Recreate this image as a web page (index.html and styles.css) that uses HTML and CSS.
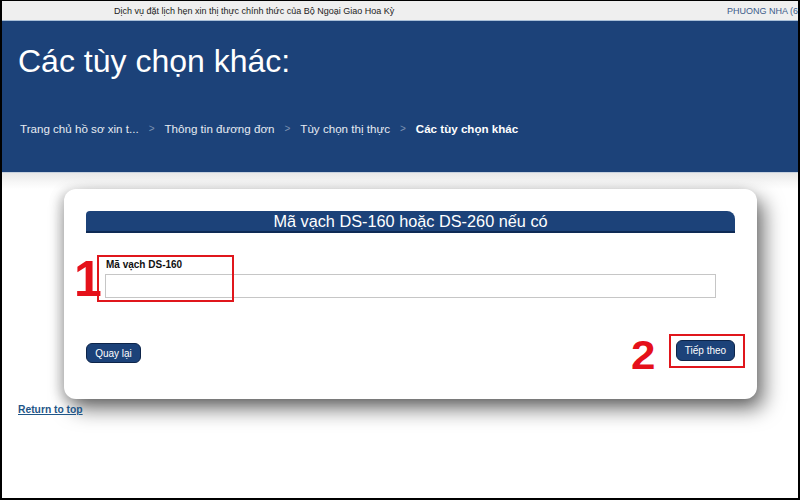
FILE: index.html
```html
<!DOCTYPE html>
<html lang="vi">
<head>
    <meta charset="UTF-8">
    <meta name="viewport" content="width=device-width, initial-scale=1.0">
    <title>Các tùy chọn khác</title>
    <link rel="stylesheet" href="styles.css">
</head>
<body>
    <div class="frame">
        <!-- Top strip -->
        <div class="topbar">
            <span class="site-name">Dịch vụ đặt lịch hẹn xin thị thực chính thức của Bộ Ngoại Giao Hoa Kỳ</span>
            <span class="user-name">PHUONG NHA (6</span>
        </div>

        <!-- Page header -->
        <div class="header">
            <h1>Các tùy chọn khác:</h1>
            <div class="crumbs">
                <span>Trang chủ hồ sơ xin t...</span>
                <span class="sep">&gt;</span>
                <span>Thông tin đương đơn</span>
                <span class="sep">&gt;</span>
                <span>Tùy chọn thị thực</span>
                <span class="sep">&gt;</span>
                <span class="current">Các tùy chọn khác</span>
            </div>
        </div>

        <div class="main">
            <div class="card">
                <div class="section-title">Mã vạch DS-160 hoặc DS-260 nếu có</div>

                <div class="field">
                    <label for="barcode">Mã vạch DS-160</label>
                    <input type="text" id="barcode">
                    <!-- annotation -->
                    <span class="mark-box mark-box-1"></span>
                    <span class="mark-num mark-num-1">1</span>
                </div>

                <div class="actions">
                    <button class="btn btn-back">Quay lại</button>
                    <div class="next-wrap">
                        <span class="mark-num mark-num-2">2</span>
                        <span class="mark-box mark-box-2"></span>
                        <button class="btn btn-next">Tiếp theo</button>
                    </div>
                </div>
            </div>

            <a href="#" class="return-top">Return to top</a>
        </div>
    </div>
</body>
</html>
```

FILE: styles.css
```css
* {
    box-sizing: border-box;
}

body, html {
    margin: 0;
    padding: 0;
    background-color: #ffffff;
    font-family: "Liberation Sans", Arial, sans-serif;
}

.frame {
    width: 800px;
    height: 500px;
    border-top: 1px solid #000;
    border-left: 2px solid #000;
    border-right: 2px solid #000;
    border-bottom: 2px solid #000;
    overflow: hidden;
    background: #fff;
}

.topbar {
    height: 20px;
    background-color: #efefef;
    border-bottom: 1px solid #a9bfd8;
    display: flex;
    justify-content: space-between;
    align-items: center;
    padding-left: 112px;
    font-size: 9px;
    white-space: nowrap;
}

.site-name {
    color: #222;
}

.user-name {
    color: #3b5b8a;
}

.header {
    height: 152px;
    background-color: #1c4279;
    padding: 20px 0 0 16px;
    border-bottom: 1px solid #c7d1de;
}

.header h1 {
    margin: 0;
    color: #fff;
    font-weight: normal;
    font-size: 32px;
    line-height: 40px;
}

.crumbs {
    margin: 41px 0 0 2px;
    font-size: 11.6px;
    color: #e6ebf2;
    display: flex;
    gap: 10px;
}

.crumbs .sep {
    color: #7d93b3;
    font-size: 10px;
    line-height: 14px;
}

.crumbs .current {
    font-weight: bold;
    color: #fff;
}

.main {
    padding: 16px 0 0 62px;
    background: linear-gradient(to bottom, #e8e8e8 0, #f8f8f8 10px, #fff 16px);
}

.card {
    width: 693px;
    height: 210px;
    background: #fff;
    border-radius: 12px;
    padding: 22px 22px 0 22px;
    box-shadow: 7px 10px 20px rgba(0, 0, 0, 0.55), -4px 2px 12px rgba(0, 0, 0, 0.2);
}

.section-title {
    height: 22px;
    background-color: #1c4279;
    border-bottom: 2px solid #0e2a55;
    border-radius: 4px 8px 0 0;
    color: #fff;
    text-align: center;
    font-size: 16.3px;
    line-height: 20px;
}

.field {
    position: relative;
    margin-top: 22px;
    padding: 4px 19px 0 19px;
}

.field label {
    display: block;
    font-weight: bold;
    font-size: 10px;
    line-height: 12px;
    color: #111;
    margin-left: 1px;
    margin-bottom: 3px;
}

.field input {
    width: 100%;
    height: 24px;
    border: 1px solid #c6c6c6;
    background: #fff;
    padding: 2px 4px;
}

.mark-box {
    position: absolute;
    border: 2px solid #e0161c;
}

.mark-box-1 {
    left: 11px;
    top: 0;
    width: 137px;
    height: 47px;
}

.mark-num {
    position: absolute;
    color: #e5111a;
    font-weight: bold;
    font-family: "Liberation Sans", Arial, sans-serif;
}

.mark-num-1 {
    left: -12px;
    top: -1px;
    font-size: 50px;
    line-height: 50px;
}

.actions {
    margin-top: 42px;
    display: flex;
    justify-content: space-between;
    align-items: flex-start;
}

.btn {
    background-color: #1c4279;
    color: #fff;
    border: 1px solid #0d2449;
    border-radius: 6px;
    font-family: "Liberation Sans", Arial, sans-serif;
    font-size: 10px;
    cursor: pointer;
    padding: 0;
}

.btn-back {
    width: 55px;
    height: 20px;
    margin-top: 3px;
}

.next-wrap {
    position: relative;
}

.btn-next {
    width: 59px;
    height: 21px;
}

.mark-box-2 {
    left: -7px;
    top: -6px;
    width: 76px;
    height: 34px;
}

.mark-num-2 {
    left: -44px;
    top: -5px;
    font-size: 40px;
    line-height: 40px;
    transform: scaleX(1.1);
}

.return-top {
    display: inline-block;
    margin: 2px 0 0 -46px;
    color: #1f5688;
    font-weight: bold;
    font-size: 10.3px;
    text-decoration: underline;
}
```
